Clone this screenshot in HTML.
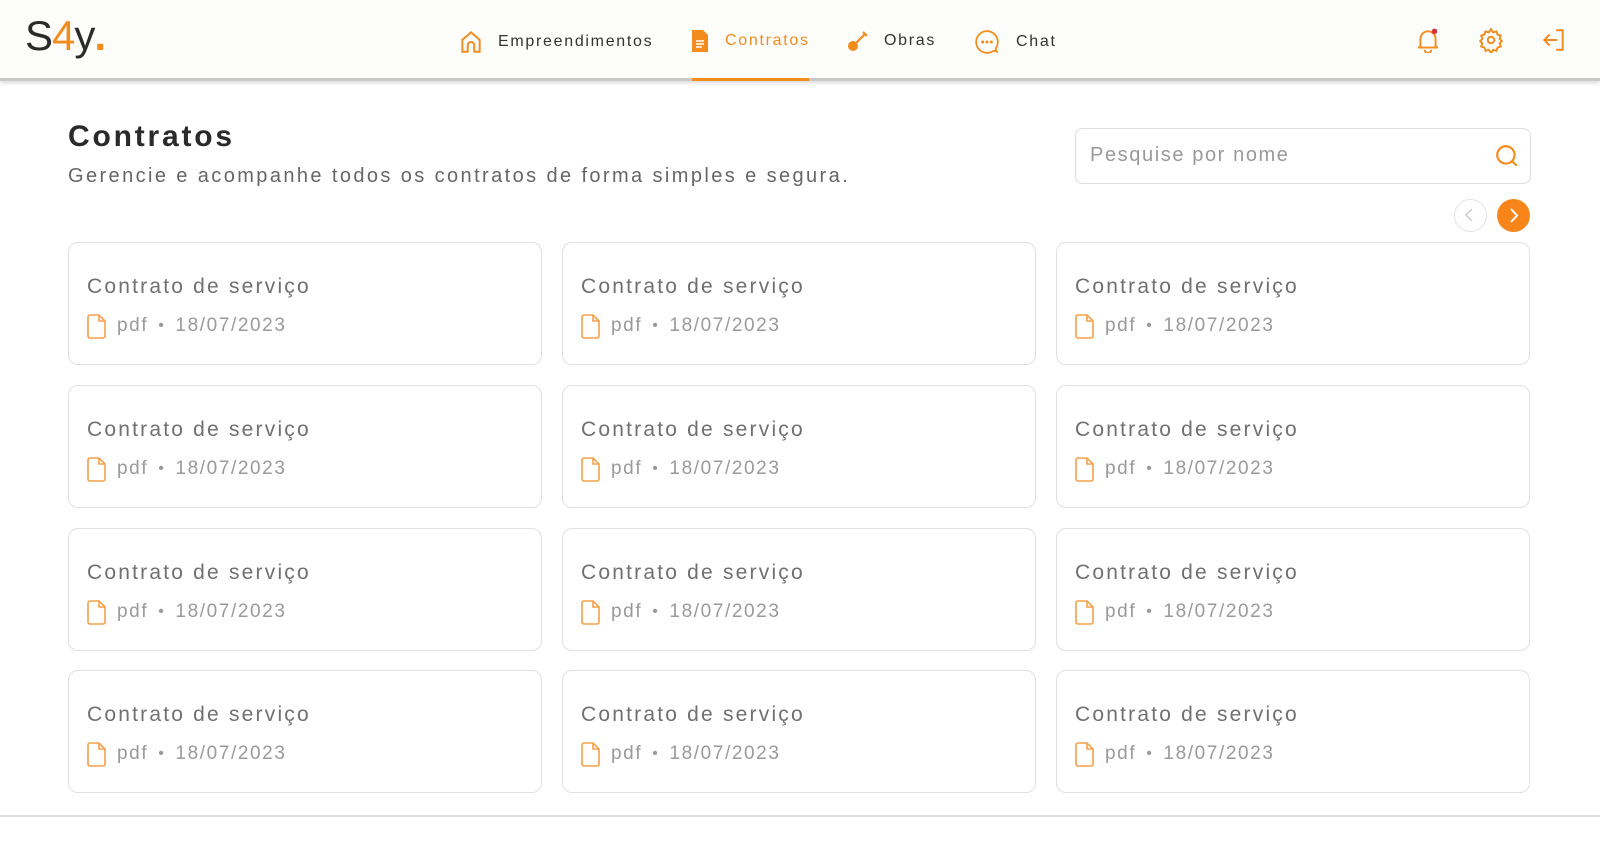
<!DOCTYPE html>
<html><head><meta charset="utf-8"><style>
*{margin:0;padding:0;box-sizing:border-box}
body{width:1600px;height:849px;background:#fff;font-family:"Liberation Sans",sans-serif;position:relative;overflow:hidden;color:#333}
.hdr{position:absolute;left:0;top:0;width:1600px;height:81px;background:#fdfdfc;border-bottom:3px solid #c9c9c9;box-shadow:0 2px 4px rgba(0,0,0,.15)}
.logo{position:absolute;left:25px;top:12px;font-size:42px;letter-spacing:-1px;color:#2b2b2b;font-weight:300}
.logo b{color:#f28c1c;font-weight:300}
.nav{position:absolute;top:29px;font-size:16px;color:#333;display:flex;align-items:center;gap:10px;letter-spacing:1.7px}
.nav.act{color:#f28c1c}
.ul{position:absolute;left:692px;top:78px;width:117px;height:3px;background:#f28c1c}
svg{display:block}
.ic{position:absolute}
h1{position:absolute;left:68px;top:120px;font-size:30px;font-weight:bold;color:#2a2a2a;letter-spacing:2.8px}
.sub{position:absolute;left:68px;top:165px;font-size:20px;color:#666;letter-spacing:2.4px}
.search{position:absolute;left:1075px;top:128px;width:456px;height:56px;border:1px solid #ddd;border-radius:8px;font-size:20px;color:#999;padding:15px 14px;letter-spacing:1.6px}
.pg{position:absolute;top:199px;width:33px;height:33px;border-radius:50%}
.card{position:absolute;width:474px;height:123px;border:1.5px solid #e0e0e0;border-radius:10px;background:#fff}
.card .t{position:absolute;left:18px;top:32px;font-size:21px;color:#707070;letter-spacing:2.2px}
.card .m{position:absolute;left:18px;top:70px;font-size:19px;color:#9a9a9a;display:flex;align-items:center;gap:10px;letter-spacing:1.6px}
.foot{position:absolute;left:0;top:815px;width:1600px;height:2px;background:#ddd}
</style></head><body>
<div class="hdr">
<div class="logo">S<b>4</b>y<b style="font-weight:bold">.</b></div>
<div class="nav" style="left:458px"><svg width="26" height="26" viewBox="0 0 24 24" fill="none" stroke="#f28c1c" stroke-width="1.8"><path d="M4 21V10l8-7 8 7v11h-5v-6a3 3 0 0 0-6 0v6z"/></svg><span style="margin-left:4px">Empreendimentos</span></div>
<div class="nav act" style="left:690px"><svg width="20" height="24" viewBox="0 0 20 24"><path d="M2 1h11l5 5v17H2z" fill="#f28c1c"/><path d="M6 12h8M6 15h8M6 18h6" stroke="#fff" stroke-width="1.5"/></svg><span style="margin-left:5px">Contratos</span></div>
<div class="nav" style="left:846px"><svg width="24" height="24" viewBox="0 0 24 24"><circle cx="7" cy="17" r="5" fill="#f28c1c"/><path d="M9 15 19 5M17 3l4 4" stroke="#f28c1c" stroke-width="2.2" fill="none"/></svg><span style="margin-left:4px">Obras</span></div>
<div class="nav" style="left:974px"><svg width="26" height="26" viewBox="0 0 24 24" fill="none" stroke="#f28c1c" stroke-width="1.6"><path d="M12 2a10 10 0 1 0 6 18l3 1-1-3A10 10 0 0 0 12 2z"/><circle cx="8" cy="12" r=".6" fill="#f28c1c"/><circle cx="12" cy="12" r=".6" fill="#f28c1c"/><circle cx="16" cy="12" r=".6" fill="#f28c1c"/></svg><span style="margin-left:6px">Chat</span></div>
<svg class="ic" style="left:1415px;top:27px" width="26" height="26" viewBox="0 0 24 24" fill="none" stroke="#f28c1c" stroke-width="1.8"><path d="M5 18V11a7 7 0 0 1 14 0v7l2 1H3z"/><path d="M9 21a3 3 0 0 0 6 0"/><circle cx="18" cy="4" r="2.5" fill="#d8323a" stroke="none"/></svg>
<svg class="ic" style="left:1478px;top:27px" width="26" height="26" viewBox="0 0 24 24" fill="none" stroke="#f28c1c" stroke-width="1.8"><circle cx="12" cy="12" r="3"/><path d="M12 2l2 3 3-1 1 3 3 1-1 3 2 2-2 2 1 3-3 1-1 3-3-1-2 3-2-3-3 1-1-3-3-1 1-3-2-2 2-2-1-3 3-1 1-3 3 1z"/></svg>
<svg class="ic" style="left:1541px;top:27px" width="26" height="26" viewBox="0 0 24 24" fill="none" stroke="#f28c1c" stroke-width="1.8"><path d="M14 3h6v18h-6M15 12H3M8 7l-5 5 5 5"/></svg>
</div>
<div class="ul"></div>
<h1>Contratos</h1>
<div class="sub">Gerencie e acompanhe todos os contratos de forma simples e segura.</div>
<div class="search">Pesquise por nome<svg style="position:absolute;right:10px;top:14px" width="26" height="26" viewBox="0 0 24 24" fill="none" stroke="#f28c1c" stroke-width="2"><circle cx="11" cy="11" r="8"/><path d="M17 17l4 4"/></svg></div>
<div class="pg" style="left:1454px;border:1.5px solid #e2e2e2"><svg width="30" height="30" viewBox="0 0 30 30"><path d="M17 9l-6 6 6 6" stroke="#ccc" stroke-width="1.5" fill="none"/></svg></div>
<div class="pg" style="left:1497px;background:#f7851a"><svg width="33" height="33" viewBox="0 0 33 33"><path d="M14 10l6 6.5-6 6.5" stroke="#fff" stroke-width="2" fill="none"/></svg></div>
<div id="cards"></div>
<div class="foot"></div>
<script>
var h='';var xs=[68,562,1056],ys=[242,385,528,670];
ys.forEach(function(y){xs.forEach(function(x){h+='<div class="card" style="left:'+x+'px;top:'+y+'px"><div class="t">Contrato de serviço</div><div class="m"><svg width="20" height="26" viewBox="0 0 20 26" fill="none" stroke="#f5a04a" stroke-width="1.6"><path d="M3 2h9l6 6v15a2 2 0 0 1-2 2H3a2 2 0 0 1-2-2V4a2 2 0 0 1 2-2z"/><path d="M12 2v6h6"/></svg><span>pdf</span><span style="font-size:16px">•</span><span>18/07/2023</span></div></div>';});});
document.getElementById('cards').innerHTML=h;
</script>
</body></html>
